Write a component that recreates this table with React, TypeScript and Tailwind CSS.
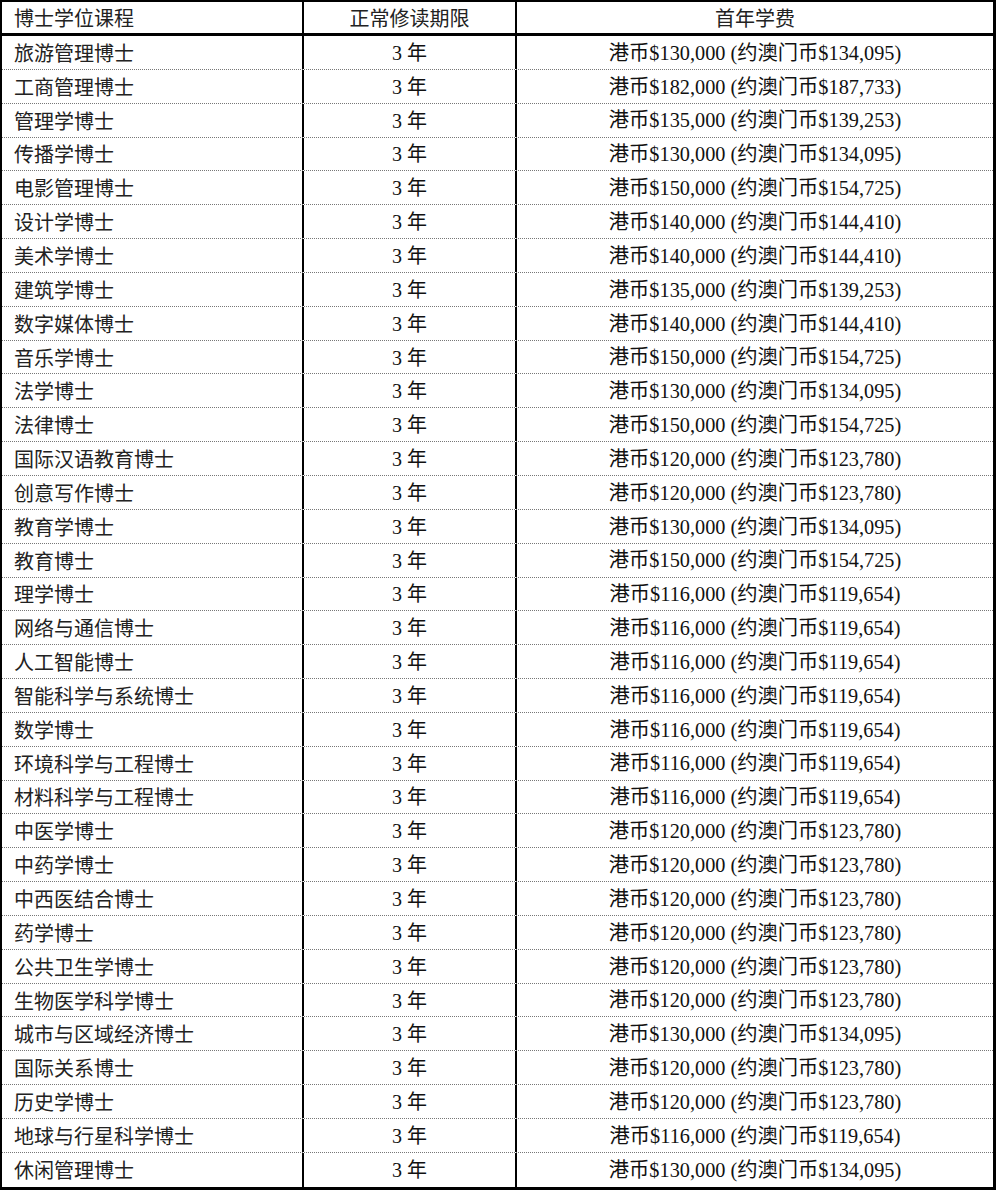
const rows: [string, string, string][] = [
  ["旅游管理博士", "130,000", "134,095"],
  ["工商管理博士", "182,000", "187,733"],
  ["管理学博士", "135,000", "139,253"],
  ["传播学博士", "130,000", "134,095"],
  ["电影管理博士", "150,000", "154,725"],
  ["设计学博士", "140,000", "144,410"],
  ["美术学博士", "140,000", "144,410"],
  ["建筑学博士", "135,000", "139,253"],
  ["数字媒体博士", "140,000", "144,410"],
  ["音乐学博士", "150,000", "154,725"],
  ["法学博士", "130,000", "134,095"],
  ["法律博士", "150,000", "154,725"],
  ["国际汉语教育博士", "120,000", "123,780"],
  ["创意写作博士", "120,000", "123,780"],
  ["教育学博士", "130,000", "134,095"],
  ["教育博士", "150,000", "154,725"],
  ["理学博士", "116,000", "119,654"],
  ["网络与通信博士", "116,000", "119,654"],
  ["人工智能博士", "116,000", "119,654"],
  ["智能科学与系统博士", "116,000", "119,654"],
  ["数学博士", "116,000", "119,654"],
  ["环境科学与工程博士", "116,000", "119,654"],
  ["材料科学与工程博士", "116,000", "119,654"],
  ["中医学博士", "120,000", "123,780"],
  ["中药学博士", "120,000", "123,780"],
  ["中西医结合博士", "120,000", "123,780"],
  ["药学博士", "120,000", "123,780"],
  ["公共卫生学博士", "120,000", "123,780"],
  ["生物医学科学博士", "120,000", "123,780"],
  ["城市与区域经济博士", "130,000", "134,095"],
  ["国际关系博士", "120,000", "123,780"],
  ["历史学博士", "120,000", "123,780"],
  ["地球与行星科学博士", "116,000", "119,654"],
  ["休闲管理博士", "130,000", "134,095"],
]

const font = "font-['Liberation_Serif','Noto_Sans_CJK_SC',serif]"
const sans = "font-['Noto_Sans_CJK_SC',sans-serif] text-[20px] text-[#222]"

export default function App() {
  return (
    <div className="bg-white w-[998px] h-[1192px]">
      <div className={`w-[996px] border-2 border-r-[3px] border-b-[3px] border-black text-[20px] text-[#111] ${font}`}>
        {/* header */}
        <div className="flex h-[34px] border-b-[3px] border-black leading-none">
          <div className={`w-[302px] border-r-2 border-black flex items-center pl-3 ${sans}`}>
            博士学位课程
          </div>
          <div className={`w-[213px] border-r-2 border-black flex items-center justify-center ${sans}`}>
            正常修读期限
          </div>
          <div className={`flex-1 flex items-center justify-center ${sans}`}>
            首年学费
          </div>
        </div>
        {rows.map(([name, hkd, mop]) => (
          <div
            key={name}
            className="flex h-[33.85px] border-b border-dotted border-[#777] last:border-b-0 leading-none"
          >
            <div className={`w-[302px] border-r-2 border-black flex items-center pl-3 pt-px ${sans}`}>
              {name}
            </div>
            <div className="w-[213px] border-r-2 border-black flex items-center justify-center pt-px">
              3 年
            </div>
            <div className="flex-1 flex items-center justify-center pt-px text-[20.3px]">
              港币${hkd} (约澳门币${mop})
            </div>
          </div>
        ))}
      </div>
    </div>
  )
}
